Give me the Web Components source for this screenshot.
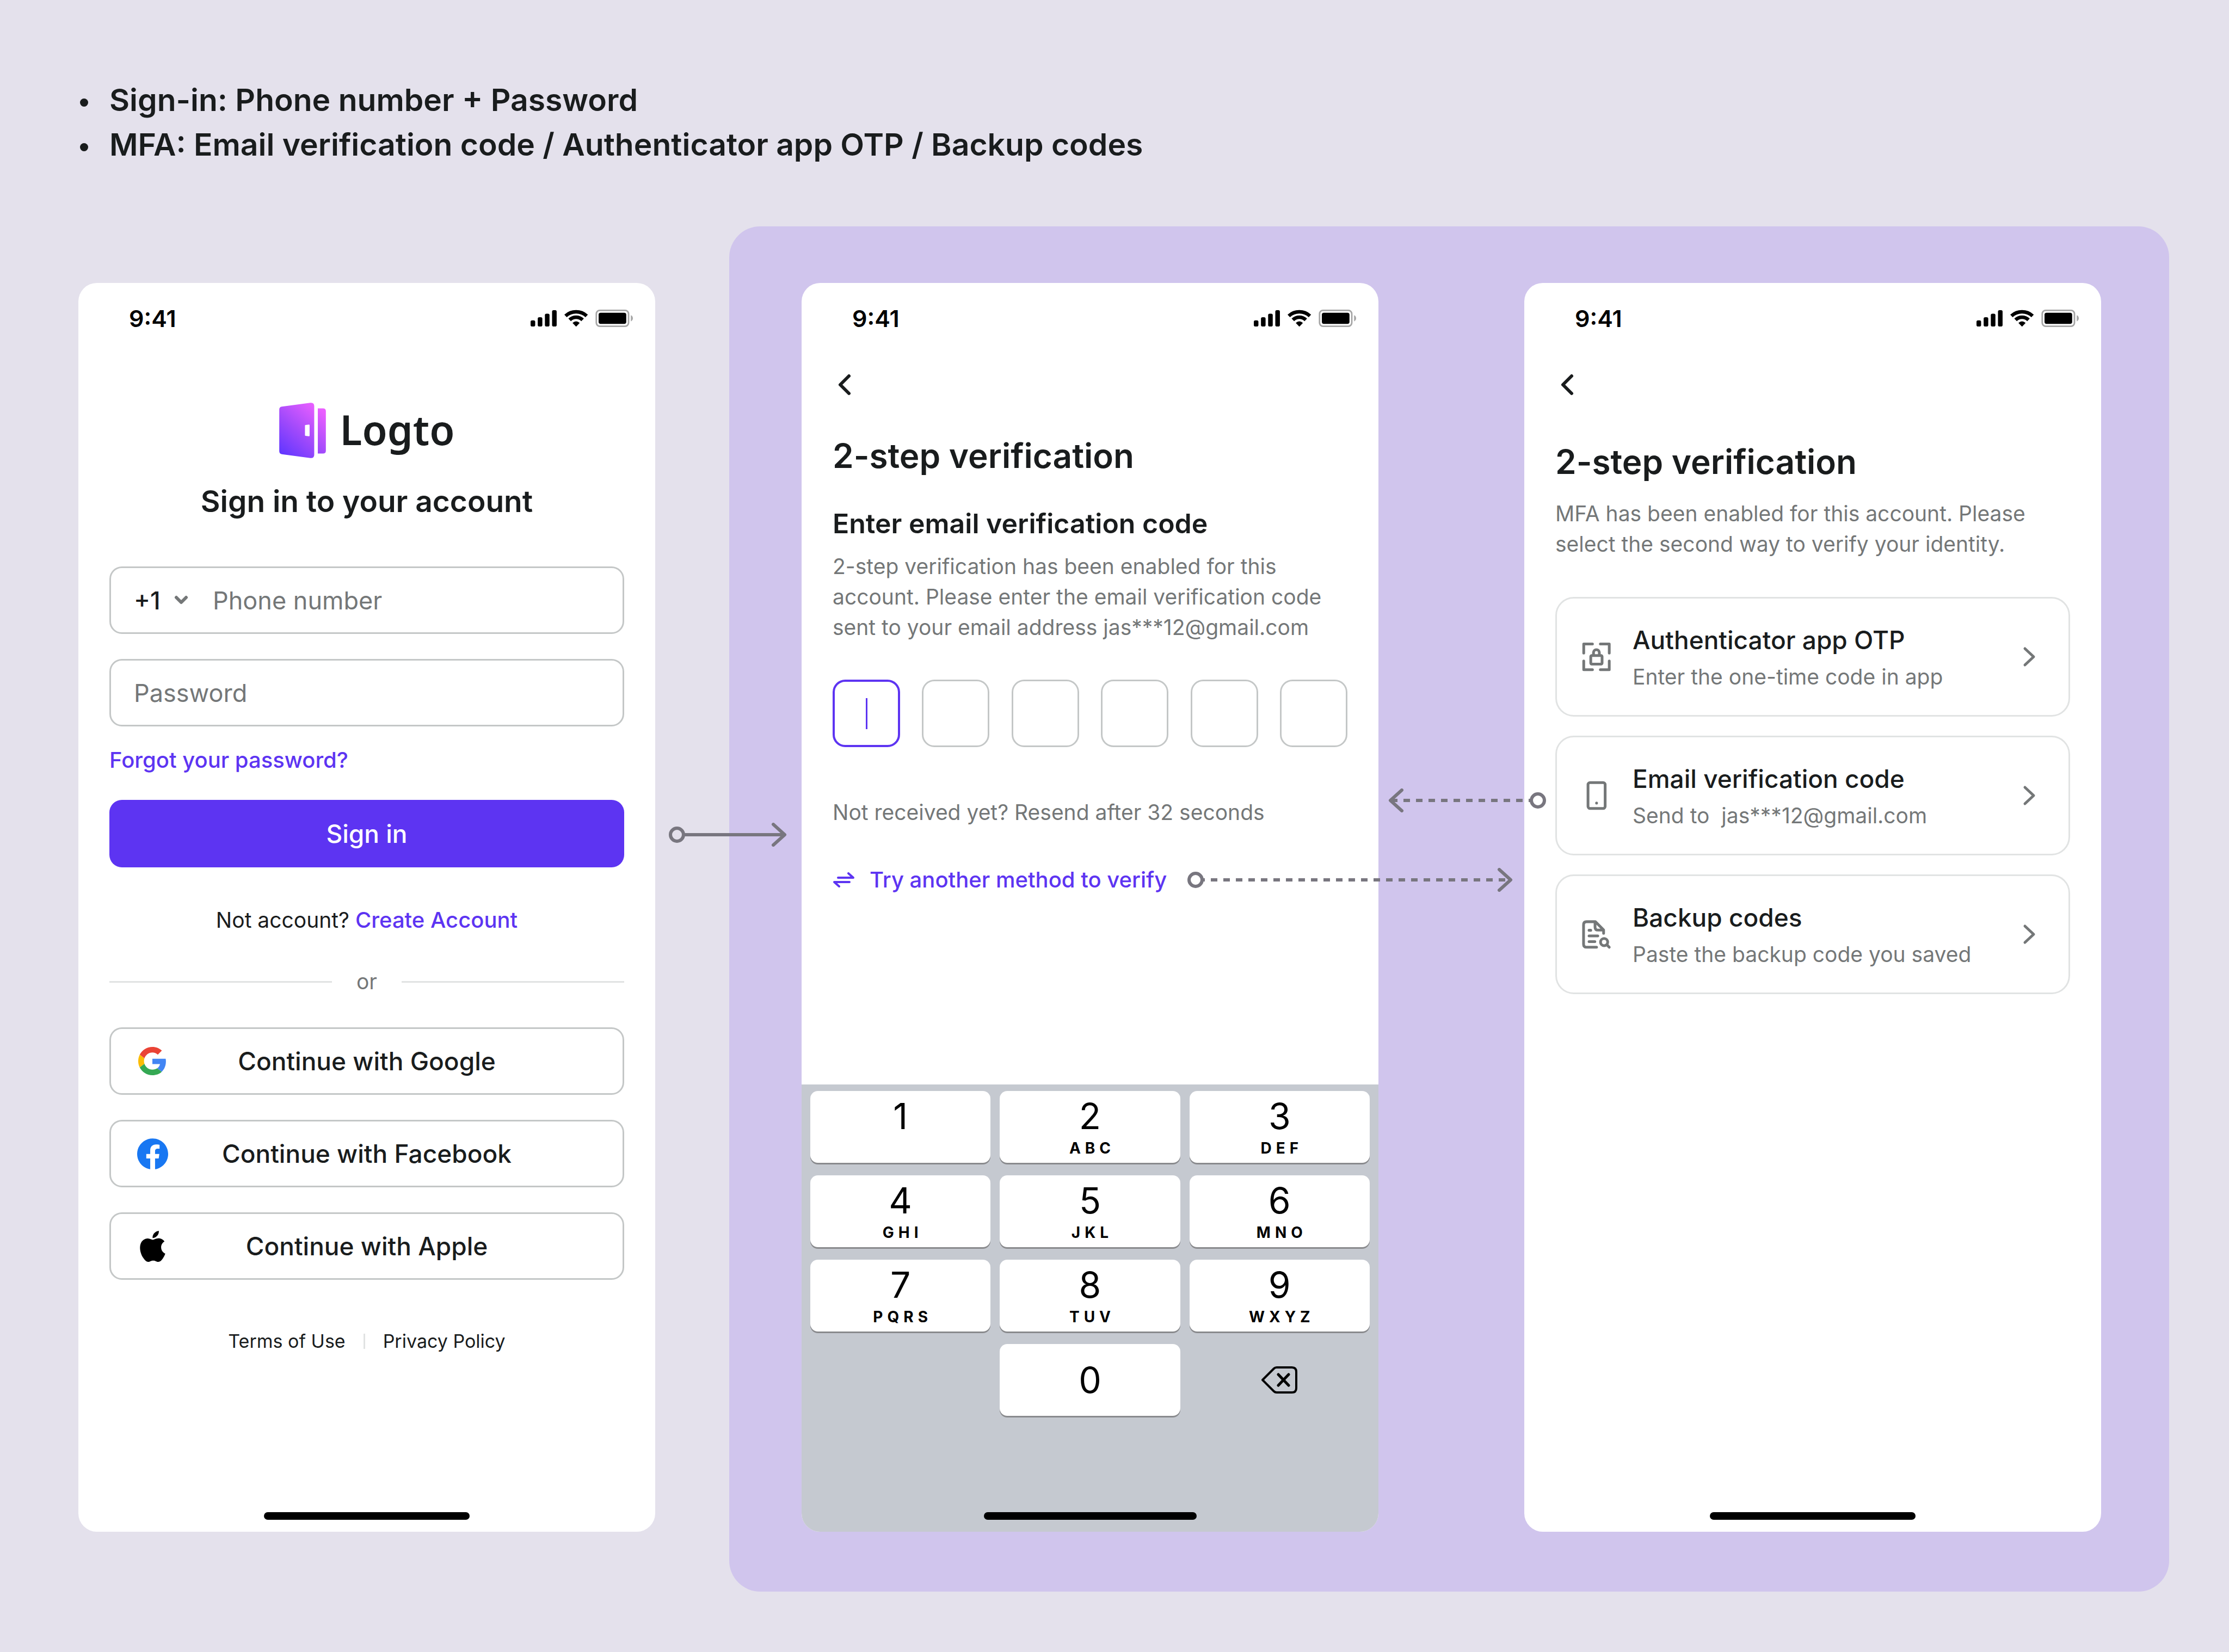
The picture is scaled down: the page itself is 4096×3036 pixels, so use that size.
<!DOCTYPE html>
<html lang="en">
<head>
<meta charset="utf-8">
<meta name="viewport" content="width=device-width, initial-scale=1">
<title>Sign-in with multi-factor authentication</title>
<style>
  :root {
    --ink: #191c1d;
    --muted: #747778;
    --outline: #c4c7c7;
    --divider: #e1e3e3;
    --brand: #5d34f2;
    --canvas: #e4e1ec;
    --panel: #d0c5ed;
    --size-hero: 57px;
    --size-h1: 62px;
    --size-h2: 55px;
    --size-h3: 50px;
    --size-label: 46px;
    --size-input: 45px;
    --size-link: 40px;
    --size-body: 39px;
    --size-small: 34px;
    --line-body: 56px;
    --line-title: 68px;
    --gutter: 57px;
    --field: 124px;
  }
  html, body { margin: 0; }
  body { background: var(--canvas); color: var(--ink); font-family: Inter, "Liberation Sans", sans-serif; }
</style>
</head>
<body>
<flow-board></flow-board>

<script>
const define = (name, html, setup) => {
  const template = document.createElement('template');
  template.innerHTML = `<style>
    *, *::before, *::after { box-sizing: border-box; }
    :host { display: block; box-sizing: border-box; }
    button, input, select { font: inherit; color: inherit; margin: 0; }
    h1, h2, h3, p, ul { margin: 0; padding: 0; font-weight: inherit; }
    a { color: var(--brand); text-decoration: none; }
    svg { display: block; flex: none; }
  </style>` + html;
  customElements.define(name, class extends HTMLElement {
    constructor() {
      super();
      this.attachShadow({ mode: 'open' }).append(template.content.cloneNode(true));
    }
    connectedCallback() { if (setup) setup(this, this.shadowRoot); }
  });
};

/* Status bar: clock, signal, wifi, battery */
define('status-bar', `
  <style>
    :host { display: flex; align-items: center; justify-content: space-between; height: 130px; padding: 0 41px 0 93px; color: #000; }
    time { font-size: 43px; line-height: 52px; font-weight: 600; }
  </style>
  <time>9:41</time>
  <svg width="188" height="32" viewBox="27 252 600 102" aria-hidden="true">
    <rect x="27" y="315" width="27" height="36" rx="9"/>
    <rect x="69" y="297" width="27" height="54" rx="9"/>
    <rect x="111" y="276" width="27" height="75" rx="9"/>
    <rect x="153" y="255" width="27" height="96" rx="9"/>
    <g fill="none" stroke="#000" stroke-width="21">
      <path d="M232 289A92 92 0 0 1 356 289"/>
      <path d="M256 312A54 54 0 0 1 332 312"/>
    </g>
    <path d="M273 330Q294 311 315 330L296 350Q294 352 292 350Z"/>
    <rect x="412.500" y="256.500" width="189" height="93" rx="20" fill="none" stroke="#a6a6a6" stroke-width="9"/>
    <rect x="426" y="270" width="162" height="66" rx="12"/>
    <path d="M615 285Q627 291 627 303T615 321Z" fill="#a6a6a6"/>
  </svg>`);

/* Phone shell with status bar, page body and home indicator */
define('phone-frame', `
  <style>
    :host { display: flex; flex-direction: column; background: #fff; border-radius: 34px; overflow: hidden; height: 100%; }
    main { padding: 0 var(--gutter); }
    footer { margin-top: auto; padding-bottom: 22px; background: var(--footer, transparent); }
    i { display: block; width: var(--indicator, 378px); height: 14px; border-radius: 7px; background: #000; margin: 0 auto; }
  </style>
  <status-bar></status-bar>
  <main><slot></slot></main>
  <footer><slot name="keyboard"></slot><i></i></footer>`);

define('back-button', `
  <style>
    :host { padding-top: 23px; }
    button { display: block; border: 0; padding: 0; background: none; }
  </style>
  <button type="button" aria-label="Back">
    <svg width="44" height="68" viewBox="0 0 44 68" fill="none" stroke="#191c1d" stroke-width="6" stroke-linecap="round" stroke-linejoin="round"><path d="M30 18L14 34L30 50"/></svg>
  </button>`);

define('brand-logo', `
  <style>
    :host { display: flex; justify-content: center; align-items: flex-start; gap: 26px; height: 102px; }
    span { font: 600 75px/98px "Noto Sans", "Open Sans", sans-serif; }
  </style>
  <svg width="86" height="102" viewBox="27 48 272 324" aria-hidden="true">
    <defs><linearGradient id="g" gradientUnits="userSpaceOnUse" x1="40" y1="350" x2="270" y2="90">
      <stop offset="0" stop-color="#6136ff"/><stop offset=".5" stop-color="#a44bfb"/><stop offset="1" stop-color="#ea5fff"/>
    </linearGradient></defs>
    <path fill="url(#g)" fill-rule="evenodd" d="M42 71L208 49Q231 46 231 68V352Q231 374 208 371L42 349Q27 347 27 331V88Q27 73 42 71ZM181 178Q177 178 177 182V238Q177 242 181 242L200 244Q204 244 204 240V180Q204 176 200 176Z"/>
    <path fill="url(#g)" d="M252 81H282Q299 81 299 98V328Q299 345 282 345H252Z"/>
  </svg>
  <span>Logto</span>`);

/* Outlined box that holds form controls */
define('field-box', `
  <style>
    :host { display: flex; align-items: center; height: var(--field); padding: 0 42px; border: 3px solid var(--outline); border-radius: 23px; background: #fff; }
  </style>
  <slot></slot>`);

const socialIcons = {
  google: `<svg width="52" height="52" viewBox="0 0 48 48"><path fill="#EA4335" d="M24 9.500c3.540 0 6.710 1.220 9.210 3.600l6.850-6.850C35.900 2.380 30.470 0 24 0 14.620 0 6.510 5.380 2.560 13.220l7.980 6.190C12.430 13.720 17.740 9.500 24 9.500z"/><path fill="#4285F4" d="M46.980 24.550c0-1.570-.15-3.090-.38-4.550H24v9.020h12.940c-.58 2.960-2.260 5.480-4.780 7.180l7.730 6c4.510-4.180 7.090-10.360 7.090-17.650z"/><path fill="#FBBC05" d="M10.530 28.590c-.48-1.450-.76-2.990-.76-4.590s.27-3.140.76-4.590l-7.980-6.190C.92 16.460 0 20.120 0 24c0 3.880.92 7.540 2.560 10.780l7.970-6.190z"/><path fill="#34A853" d="M24 48c6.480 0 11.930-2.130 15.890-5.810l-7.730-6c-2.150 1.450-4.920 2.300-8.160 2.300-6.260 0-11.570-4.220-13.470-9.910l-7.980 6.190C6.510 42.620 14.620 48 24 48z"/></svg>`,
  facebook: `<svg width="57" height="57" viewBox="0 0 24 24"><path fill="#1877F2" d="M24 12.073c0-6.627-5.373-12-12-12s-12 5.373-12 12c0 5.990 4.388 10.954 10.125 11.854v-8.385H7.078v-3.470h3.047V9.430c0-3.007 1.792-4.669 4.533-4.669 1.312 0 2.686.235 2.686.235v2.953H15.830c-1.491 0-1.956.925-1.956 1.874v2.250h3.328l-.532 3.470h-2.796v8.385C19.612 23.027 24 18.062 24 12.073z"/></svg>`,
  apple: `<svg width="57" height="57" viewBox="0 0 24 24"><path d="M12.152 6.896c-.948 0-2.415-1.078-3.960-1.040-2.040.027-3.910 1.183-4.961 3.014-2.117 3.675-.546 9.103 1.519 12.090 1.013 1.454 2.208 3.090 3.792 3.039 1.520-.065 2.090-.987 3.935-.987 1.831 0 2.350.987 3.960.948 1.637-.026 2.676-1.480 3.676-2.948 1.156-1.688 1.636-3.325 1.662-3.415-.039-.013-3.182-1.221-3.220-4.857-.026-3.040 2.480-4.494 2.597-4.559-1.429-2.090-3.623-2.324-4.390-2.376-2-.156-3.675 1.090-4.610 1.090zM15.530 3.830c.843-1.012 1.400-2.427 1.245-3.830-1.207.052-2.662.805-3.532 1.818-.78.896-1.454 2.338-1.273 3.714 1.338.104 2.715-.688 3.559-1.701"/></svg>`
};

define('social-button', `
  <style>
    button { display: grid; grid-template-columns: 68px 1fr 68px; align-items: center; width: 100%; height: var(--field); padding: 0 42px; border: 3px solid var(--outline); border-radius: 23px; background: #fff; font-size: var(--size-label); line-height: var(--line-body); font-weight: 500; }
    .icon { display: grid; place-items: center; }
  </style>
  <button type="button"><span class="icon"></span><span><slot></slot></span></button>`,
  (el, root) => { root.querySelector('.icon').innerHTML = socialIcons[el.getAttribute('provider')]; });

define('sign-in-screen', `
  <style>
    brand-logo { margin-top: 90px; }
    h1 { margin-top: 45px; font-size: var(--size-h2); line-height: var(--line-title); font-weight: 600; text-align: center; }
    form { display: flex; flex-direction: column; margin-top: 86px; }
    field-box { font-size: var(--size-input); }
    field-box + field-box { margin-top: 46px; }
    input { flex: 1; min-width: 0; height: 68px; padding: 0; border: 0; outline: 0; background: none; }
    input::placeholder { color: var(--muted); opacity: 1; }
    .code { display: flex; align-items: center; margin-right: 45px; }
    select { appearance: none; width: 100px; height: 68px; padding: 0; border: 0; outline: 0; background: none; font-weight: 500; }
    .code svg { margin-left: -26px; pointer-events: none; }
    .forgot { align-self: flex-start; margin-top: 34px; font-size: var(--size-link); line-height: var(--line-body); font-weight: 500; }
    .submit { height: var(--field); margin-top: 45px; border: 0; border-radius: 23px; background: var(--brand); color: #fff; font-size: var(--size-label); font-weight: 500; }
    .join { margin-top: 69px; font-size: var(--size-body); line-height: var(--line-body); text-align: center; }
    .join a { font-size: var(--size-link); font-weight: 500; }
    .or { display: flex; align-items: center; gap: 45px; margin: 57px 0 56px; color: var(--muted); font-size: var(--size-body); line-height: var(--line-body); }
    .or::before, .or::after { content: ""; flex: 1; height: 3px; background: var(--divider); }
    .social { display: flex; flex-direction: column; gap: 46px; }
    .legal { display: flex; justify-content: center; align-items: center; gap: 33px; margin-top: 88px; font-size: var(--size-small); line-height: 50px; }
    .legal a { color: var(--ink); }
    .legal i { width: 3px; height: 28px; background: var(--divider); }
  </style>
  <phone-frame>
    <brand-logo></brand-logo>
    <h1>Sign in to your account</h1>
    <form>
      <field-box>
        <span class="code">
          <select aria-label="Country code"><option>+1</option></select>
          <svg width="26" height="20" viewBox="0 0 26 20" fill="none" stroke="#747778" stroke-width="6" stroke-linecap="round" stroke-linejoin="round"><path d="M4 5L13 14L22 5"/></svg>
        </span>
        <input type="tel" placeholder="Phone number" aria-label="Phone number">
      </field-box>
      <field-box><input type="password" placeholder="Password" aria-label="Password" autocomplete="off"></field-box>
      <a class="forgot" href="#">Forgot your password?</a>
      <button class="submit" type="button">Sign in</button>
    </form>
    <p class="join">Not account? <a href="#">Create Account</a></p>
    <div class="or">or</div>
    <div class="social">
      <social-button provider="google">Continue with Google</social-button>
      <social-button provider="facebook">Continue with Facebook</social-button>
      <social-button provider="apple">Continue with Apple</social-button>
    </div>
    <div class="legal"><a href="#">Terms of Use</a><i></i><a href="#">Privacy Policy</a></div>
  </phone-frame>`);

define('otp-input', `
  <style>
    :host { display: flex; justify-content: space-between; }
    input { width: var(--field); height: var(--field); padding: 0; border: 3px solid var(--outline); border-radius: 23px; outline: 0; background: #fff; text-align: center; font-size: var(--size-input); }
    input:first-of-type { border: 4px solid var(--brand); background: linear-gradient(var(--brand), var(--brand)) center / 3px 57px no-repeat #fff; }
  </style>
  <input aria-label="Digit 1"><input aria-label="Digit 2"><input aria-label="Digit 3"><input aria-label="Digit 4"><input aria-label="Digit 5"><input aria-label="Digit 6">`);

define('number-pad', `
  <style>
    :host { display: grid; grid-template-columns: repeat(3, 1fr); grid-auto-rows: 132px; gap: 23px 17px; padding: 12px 16px 177px; color: #000; }
    button { display: flex; flex-direction: column; align-items: center; padding: 8px 0 0; border: 0; border-radius: 14px; background: #fff; box-shadow: 0 3px 0 #898a8d; font-size: 66px; line-height: 76px; }
    small { font-size: 28px; line-height: 42px; font-weight: 700; letter-spacing: 8px; padding-left: 8px; }
    .zero { grid-column: 2; justify-content: center; padding: 0; }
    .delete { justify-content: center; padding: 0; background: none; box-shadow: none; }
  </style>
  <button type="button">1</button>
  <button type="button">2<small>ABC</small></button>
  <button type="button">3<small>DEF</small></button>
  <button type="button">4<small>GHI</small></button>
  <button type="button">5<small>JKL</small></button>
  <button type="button">6<small>MNO</small></button>
  <button type="button">7<small>PQRS</small></button>
  <button type="button">8<small>TUV</small></button>
  <button type="button">9<small>WXYZ</small></button>
  <button type="button" class="zero">0</button>
  <button type="button" class="delete" aria-label="Delete">
    <svg width="66" height="50" viewBox="0 0 66 50" fill="none" stroke="#000" stroke-width="4" stroke-linecap="round" stroke-linejoin="round"><path d="M2 25L23 4Q25 2 28 2H56Q64 2 64 10V40Q64 48 56 48H28Q25 48 23 46Z"/><path stroke-width="5" d="M31 15L50 35M50 15L31 35"/></svg>
  </button>`);

define('verify-screen', `
  <style>
    phone-frame { --footer: #c5c9d0; --indicator: 391px; }
    h1 { margin-top: 52px; font-size: var(--size-h1); line-height: 90px; font-weight: 600; }
    h2 { margin-top: 45px; font-size: var(--size-h3); line-height: var(--line-title); font-weight: 600; }
    p { color: var(--muted); font-size: var(--size-body); line-height: var(--line-body); }
    .intro { margin-top: 17px; }
    otp-input { margin-top: 68px; }
    .resend { margin-top: 92px; }
    .switch { display: inline-flex; align-items: center; gap: 27px; margin-top: 68px; font-size: var(--size-link); line-height: var(--line-body); font-weight: 500; }
  </style>
  <phone-frame>
    <back-button></back-button>
    <h1>2-step verification</h1>
    <h2>Enter email verification code</h2>
    <p class="intro">2-step verification has been enabled for this<br>account. Please enter the email verification code<br>sent to your email address jas***12@gmail.com</p>
    <otp-input></otp-input>
    <p class="resend">Not received yet? Resend after 32 seconds</p>
    <a class="switch" href="#">
      <svg width="41" height="28" viewBox="0 0 41 28" fill="none" stroke="#5d34f2" stroke-width="4" stroke-linecap="round" stroke-linejoin="round"><path d="M10 10H38L29 2M31 18H3L12 26"/></svg>
      <span>Try another method to verify</span>
    </a>
    <number-pad slot="keyboard"></number-pad>
  </phone-frame>`);

const methodIcons = {
  otp: `<path d="M58 112V59H109M155 59H207V112M207 158V209H155M109 209H58V158"/><rect x="99" y="126" width="66" height="50" rx="6"/><path d="M115 124V109A16 16 0 0 1 149 109V124"/>`,
  email: `<rect x="83" y="58" width="100" height="151" rx="12"/><path d="M133 177V178"/>`,
  backup: `<path d="M133 209H75Q57 209 57 191V78Q57 60 75 60H126L174 108V128M124 62V92Q124 109 141 109H172M89 110H99M89 143H140M89 176H123"/><circle cx="177" cy="179" r="21"/><path d="M192 194L207 209"/>`
};

define('method-card', `
  <style>
    button { display: flex; align-items: center; gap: 23px; width: 100%; height: 220px; padding: 0 50px 0 31px; border: 3px solid var(--divider); border-radius: 34px; background: #fff; text-align: left; }
    .text { flex: 1; display: flex; flex-direction: column; gap: 6px; }
    b { font-size: var(--size-label); line-height: var(--line-title); font-weight: 500; }
    .sub { color: var(--muted); font-size: var(--size-body); line-height: var(--line-body); white-space: pre; }
  </style>
  <button type="button">
    <svg class="icon" width="85" height="85" viewBox="0 0 270 270" fill="none" stroke="#747778" stroke-width="16" stroke-linecap="round" stroke-linejoin="round"></svg>
    <span class="text"><b><slot name="title"></slot></b><span class="sub"><slot></slot></span></span>
    <svg width="45" height="68" viewBox="0 0 45 68" fill="none" stroke="#747778" stroke-width="5" stroke-linecap="round" stroke-linejoin="round"><path d="M15 19L31 34L15 49"/></svg>
  </button>`,
  (el, root) => { root.querySelector('.icon').innerHTML = methodIcons[el.getAttribute('icon')]; });

define('methods-screen', `
  <style>
    h1 { margin-top: 63px; font-size: var(--size-h1); line-height: 90px; font-weight: 600; }
    p { margin-top: 22px; color: var(--muted); font-size: var(--size-body); line-height: var(--line-body); }
    .list { display: flex; flex-direction: column; gap: 35px; margin-top: 69px; }
  </style>
  <phone-frame>
    <back-button></back-button>
    <h1>2-step verification</h1>
    <p>MFA has been enabled for this account. Please<br>select the second way to verify your identity.</p>
    <div class="list">
      <method-card icon="otp"><span slot="title">Authenticator app OTP</span>Enter the one-time code in app</method-card>
      <method-card icon="email"><span slot="title">Email verification code</span>Send to  jas***12@gmail.com</method-card>
      <method-card icon="backup"><span slot="title">Backup codes</span>Paste the backup code you saved</method-card>
    </div>
  </phone-frame>`);

/* Arrow between screens; length in pixels, optionally dashed or reversed */
define('flow-connector', `
  <style>
    :host([reverse]) svg { transform: scaleX(-1); }
  </style>
  <svg height="44" fill="none" stroke="#78767f" stroke-width="6" stroke-linecap="round" stroke-linejoin="round" aria-hidden="true"></svg>`,
  (el, root) => {
    const length = Number(el.getAttribute('length'));
    const svg = root.querySelector('svg');
    svg.setAttribute('width', length);
    const dash = el.hasAttribute('dashed') ? 'stroke-dasharray="12 11" stroke-dashoffset="8"' : '';
    svg.innerHTML = `<circle cx="15" cy="22" r="12"/><path stroke-linecap="butt" ${dash} d="M28 22H${length - 4}"/><path d="M${length - 25} 3L${length - 4} 22L${length - 25} 41"/>`;
  });

define('flow-board', `
  <style>
    :host { display: flex; flex-direction: column; min-height: 100vh; padding: 143px 110px 111px 144px; }
    ul { list-style: none; font-size: var(--size-hero); line-height: 82px; font-weight: 600; }
    li { display: flex; align-items: center; }
    li::before { content: ""; width: 15px; height: 15px; margin: 8px 39px 0 3px; border-radius: 50%; background: var(--ink); }
    .board { flex: 1; display: grid; grid-template-columns: 1060fr 2646fr; column-gap: 136px; margin-top: 109px; }
    .first { position: relative; z-index: 1; padding: 104px 0 110px; }
    .panel { display: grid; grid-template-columns: 1fr 1fr; column-gap: 268px; padding: 104px 125px 110px 133px; border-radius: 57px; background: var(--panel); }
    .step { position: relative; height: 100%; }
    .step > :first-child { height: 100%; }
    flow-connector { position: absolute; z-index: 1; }
    .to-verify { left: calc(100% + 25px); top: 992px; }
    .to-methods { left: 709px; top: 1075px; z-index: 2; }
    .to-code { right: calc(100% - 40px); top: 929px; }
  </style>
  <ul>
    <li>Sign-in: Phone number + Password</li>
    <li>MFA: Email verification code / Authenticator app OTP / Backup codes</li>
  </ul>
  <div class="board">
    <div class="first"><div class="step">
      <sign-in-screen></sign-in-screen>
      <flow-connector class="to-verify" length="217"></flow-connector>
    </div></div>
    <section class="panel">
      <div class="step">
        <verify-screen></verify-screen>
        <flow-connector class="to-methods" length="598" dashed></flow-connector>
      </div>
      <div class="step">
        <methods-screen></methods-screen>
        <flow-connector class="to-code" length="290" dashed reverse></flow-connector>
      </div>
    </section>
  </div>`);
</script>
</body>
</html>
